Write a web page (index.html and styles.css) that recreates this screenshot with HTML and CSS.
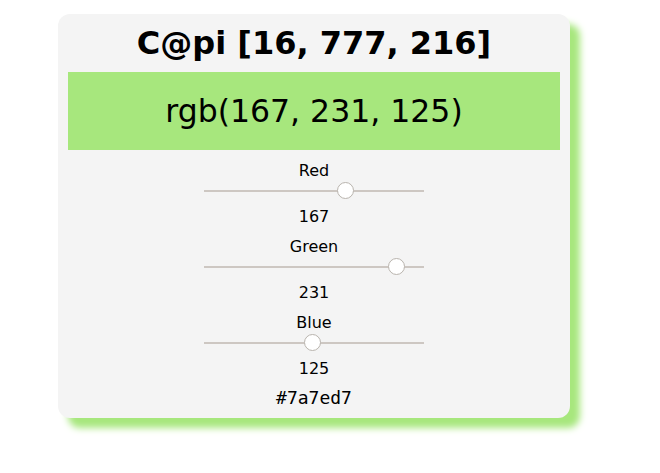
FILE: index.html
```html
<!DOCTYPE html>
<html>
<head>
<meta charset="utf-8">
<link rel="stylesheet" href="styles.css">
</head>
<body>
<div class="card">
  <h1 class="title">C@pi [16, 777, 216]</h1>
  <div class="swatch">rgb(167, 231, 125)</div>
  <div class="group">
    <div class="label">Red</div>
    <div class="slider"><div class="track"></div><div class="thumb" style="left: 132.9px"></div></div>
    <div class="value">167</div>
  </div>
  <div class="group">
    <div class="label">Green</div>
    <div class="slider"><div class="track"></div><div class="thumb" style="left: 183.9px"></div></div>
    <div class="value">231</div>
  </div>
  <div class="group">
    <div class="label">Blue</div>
    <div class="slider"><div class="track"></div><div class="thumb" style="left: 99.5px"></div></div>
    <div class="value">125</div>
  </div>
  <div class="hex">#7a7ed7</div>
</div>
</body>
</html>
```
FILE: styles.css
```css
html, body {
  margin: 0;
  padding: 0;
  background: #ffffff;
}
body {
  min-height: 473px;
  box-sizing: border-box;
  padding: 14px 0 40px 58px;
  font-family: "DejaVu Sans", sans-serif;
  color: #000;
}
.card {
  width: 512px;
  height: 404px;
  box-sizing: border-box;
  padding: 0 10px;
  background: #f4f4f4;
  border-radius: 12px;
  box-shadow: 10px 10px 7px #a7e77d;
  display: flex;
  flex-direction: column;
  align-items: center;
}
.title {
  margin: 0;
  height: 58px;
  line-height: 58px;
  font-size: 32px;
  font-weight: bold;
  text-align: center;
}
.swatch {
  align-self: stretch;
  height: 78px;
  background: #a7e77d;
  display: flex;
  align-items: center;
  justify-content: center;
  font-size: 31.5px;
}
.group {
  display: flex;
  flex-direction: column;
  align-items: center;
  margin-top: 11px;
}
.group + .group {
  margin-top: 11px;
}
.label, .value {
  font-size: 16px;
  line-height: 19px;
  height: 19px;
}
.slider {
  position: relative;
  width: 220px;
  height: 22px;
}
.value {
  margin-top: 5px;
}
.track {
  position: absolute;
  left: 0;
  right: 0;
  top: 10px;
  height: 2px;
  background: #cdc7c2;
}
.thumb {
  position: absolute;
  top: 2px;
  width: 17px;
  height: 17px;
  box-sizing: border-box;
  border-radius: 50%;
  background: #ffffff;
  border: 1px solid #b9b4ae;
}
.hex {
  margin-top: 10px;
  font-family: "DejaVu Sans Mono", monospace;
  font-size: 18px;
  line-height: 19px;
}
```
